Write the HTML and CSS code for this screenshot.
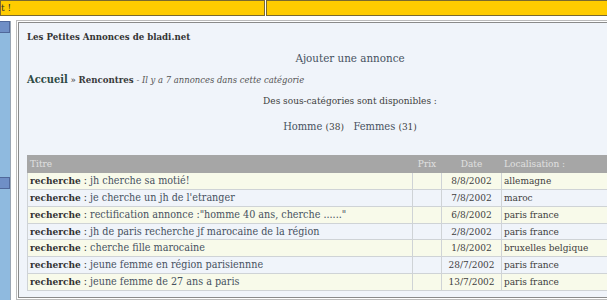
FILE: index.html
```html
<!DOCTYPE html>
<html lang="fr">
  <head>
    <meta charset="utf-8">
    <title>Les Petites Annonces de bladi.net</title>
    <link rel="stylesheet" href="styles.css">
  </head>
  <body>
<div class="topbar">
  <div class="topCell first"><span>t !</span></div>
  <div class="topCell second"></div>
</div>
<div class="layout">
  <div class="sidebar">
    <div class="sideHead"></div>
    <div class="sideBlock"></div>
  </div>
  <div class="main">
    <div class="boxTitle">Les Petites Annonces de bladi.net</div>
    <div class="addLink"><a href="#">Ajouter une annonce</a></div>
    <div class="crumbs">
      <a class="home" href="#">Accueil</a> &raquo; <b>Rencontres</b> <i>- Il y a 7 annonces dans cette catégorie</i>
    </div>
    <div class="subcats">Des sous-catégories sont disponibles :</div>
    <div class="subList">
      <a href="#">Homme</a> <small>(38)</small>&nbsp;&nbsp;&nbsp;<a href="#">Femmes</a> <small>(31)</small>
    </div>
    <table class="ads">
      <tr class="head">
        <td class="titleCol">Titre</td>
        <td class="prix">Prix</td>
        <td class="date">Date</td>
        <td class="loc">Localisation :</td>
      </tr>
      <tr class="odd">
        <td><b>recherche</b> : <a href="#">jh cherche sa motié!</a></td>
        <td></td><td class="date">8/8/2002</td><td class="loc">allemagne</td>
      </tr>
      <tr class="even">
        <td><b>recherche</b> : <a href="#">je cherche un jh de l'etranger</a></td>
        <td></td><td class="date">7/8/2002</td><td class="loc">maroc</td>
      </tr>
      <tr class="odd">
        <td><b>recherche</b> : <a href="#">rectification annonce :"homme 40 ans, cherche ......"</a></td>
        <td></td><td class="date">6/8/2002</td><td class="loc">paris france</td>
      </tr>
      <tr class="even">
        <td><b>recherche</b> : <a href="#">jh de paris recherche jf marocaine de la région</a></td>
        <td></td><td class="date">2/8/2002</td><td class="loc">paris france</td>
      </tr>
      <tr class="odd">
        <td><b>recherche</b> : <a href="#">cherche fille marocaine</a></td>
        <td></td><td class="date">1/8/2002</td><td class="loc">bruxelles belgique</td>
      </tr>
      <tr class="even">
        <td><b>recherche</b> : <a href="#">jeune femme en région parisiennne</a></td>
        <td></td><td class="date">28/7/2002</td><td class="loc">paris france</td>
      </tr>
      <tr class="odd">
        <td><b>recherche</b> : <a href="#">jeune femme de 27 ans a paris</a></td>
        <td></td><td class="date">13/7/2002</td><td class="loc">paris france</td>
      </tr>
    </table>
  </div>
</div>
  </body>
</html>
```

FILE: styles.css
```css
* {
  margin: 0px;
  padding: 0px;
}
body {
  font-family: 'DejaVu Serif Condensed', 'DejaVu Serif', serif;
  font-stretch: condensed;
  font-size: 10px;
  color: #404040;
  background-color: white;
  overflow: hidden;
  width: 720px;
}
a {
  color: #465160;
  text-decoration: none;
}
.topbar {
  display: flex;
  height: 16px;
}
.topCell {
  background-color: #ffcc00;
  border: 1px solid #7a6a30;
  font-size: 10px;
  line-height: 14px;
  color: #333333;
}
.first {
  width: 263px;
}
.second {
  flex: 1;
  margin-left: 1px;
}
.layout {
  display: flex;
  margin-top: 5px;
  gap: 7px;
}
.sidebar {
  width: 10px;
  height: 290px;
  background-color: #8fbadf;
  border-right: 1px solid #9aa6b4;
}
.sideHead {
  height: 10px;
  background-color: #6f8fc6;
  border: 1px solid #50689a;
  border-left: none;
}
.sideBlock {
  margin-top: 144px;
  height: 10px;
  background-color: #6f8fc6;
  border: 1px solid #50689a;
  border-left: none;
}
.main {
  width: 646px;
  height: 259px;
  background-color: #f0f4fa;
  border: 1px solid #8a8a8a;
  box-shadow: 0px 0px 0px 1px white, 0px 0px 0px 2px #bbbbbb;
  padding: 8px 8px 7px 8px;
  margin-top: 1px;
}
.boxTitle {
  font-weight: bold;
  font-size: 9.6px;
  line-height: 11px;
  color: #333333;
}
.addLink {
  text-align: center;
  font-size: 11.5px;
  line-height: 14px;
  margin-top: 9px;
}
.crumbs {
  margin-top: 8px;
  font-size: 9.6px;
  line-height: 13px;
}
.crumbs b {
  color: #3a3a3a;
}
.crumbs i {
  color: #555555;
  font-size: 9.4px;
}
.home {
  font-weight: bold;
  font-size: 11px;
  color: #2e4a45;
}
.subcats {
  text-align: center;
  line-height: 13px;
  margin-top: 8px;
}
.subList {
  text-align: center;
  font-size: 11px;
  line-height: 14px;
  margin-top: 13px;
}
.subList small {
  font-size: 10px;
}
.ads {
  margin-top: 21px;
  width: 100%;
  border-collapse: collapse;
  font-size: 10.7px;
}
.ads td {
  border: 1px solid #cfd3d6;
  padding: 0px 2px;
  height: 15.9px;
  line-height: 14px;
  white-space: nowrap;
}
.ads b {
  font-size: 10px;
  color: #333333;
}
.head td {
  background-color: #a6a6a6;
  color: #e0e0e0;
  border-color: #a6a6a6;
  font-size: 10px;
}
.odd td {
  background-color: #f8faea;
}
.even td {
  background-color: #f0f4fa;
}
.titleCol {
  width: 380px;
}
.prix {
  width: 24px;
  text-align: center;
}
.ads .date {
  width: 55px;
  text-align: center;
  font-size: 10px;
}
.ads .loc {
  text-align: left;
  font-size: 10px;
}
```
